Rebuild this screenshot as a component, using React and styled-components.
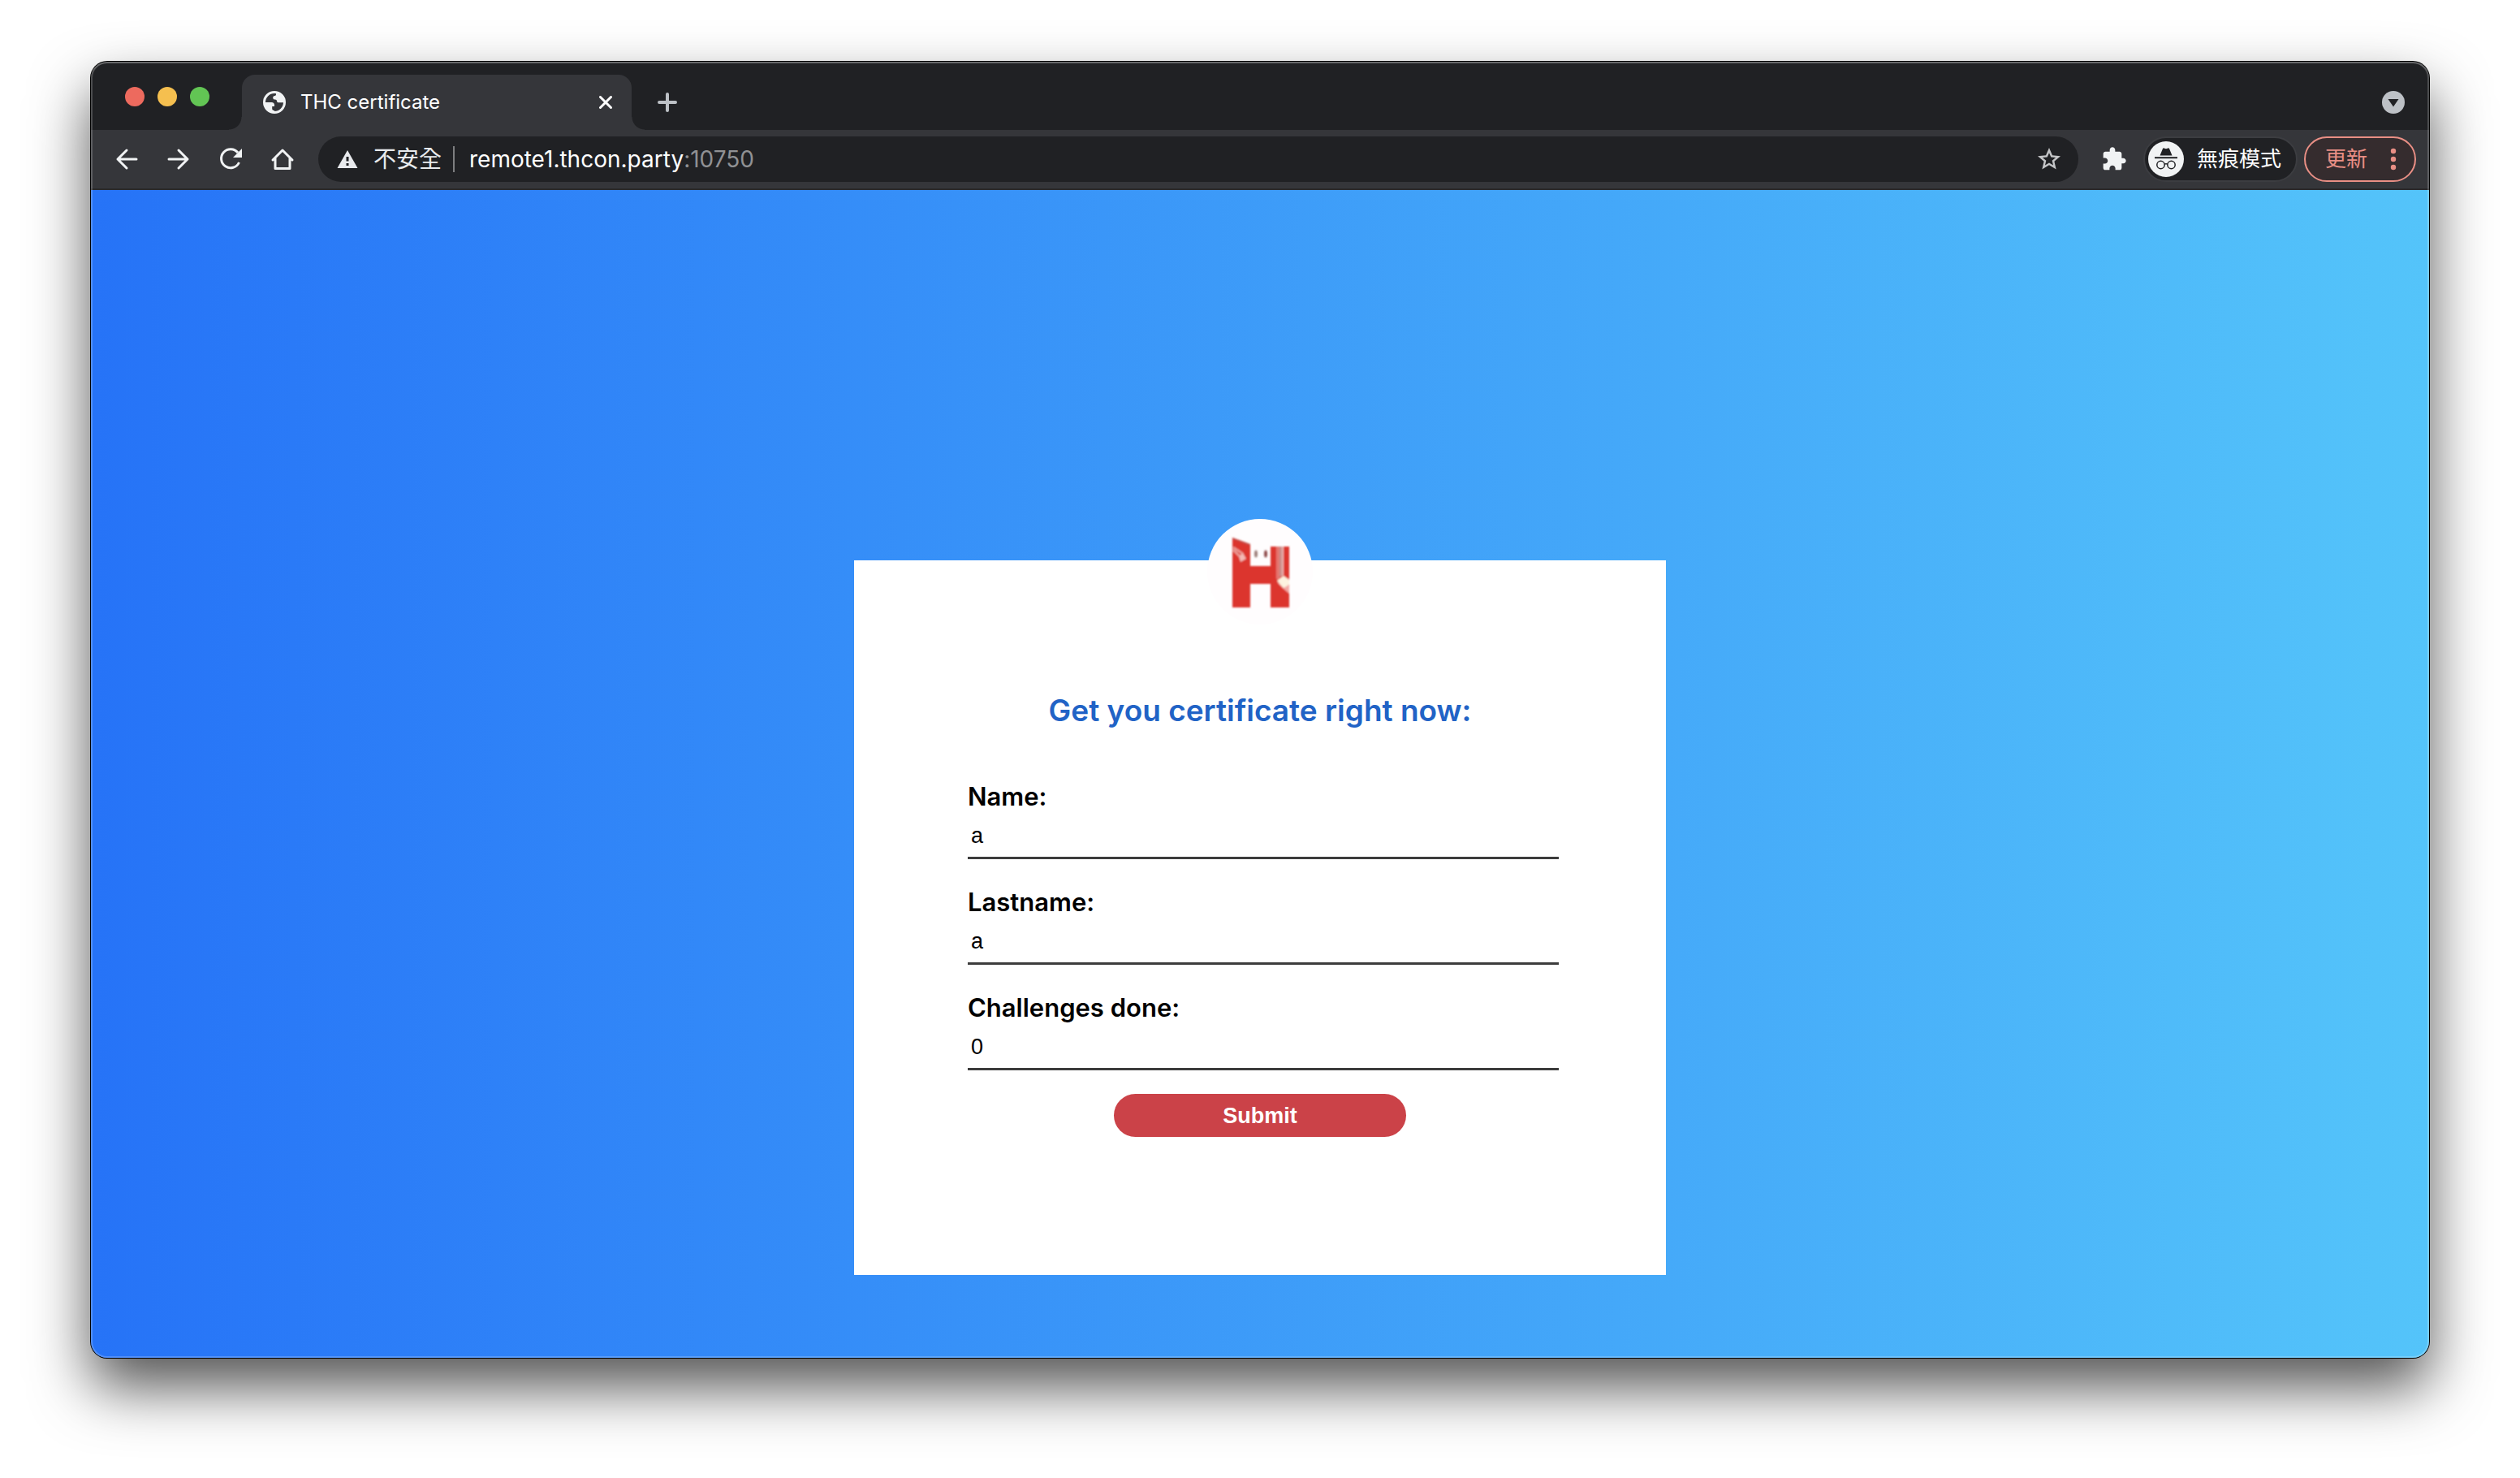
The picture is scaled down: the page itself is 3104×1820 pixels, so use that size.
import React, { useState } from "react";
import styled, { createGlobalStyle } from "styled-components";

const GlobalStyle = createGlobalStyle`
  *, *::before, *::after { box-sizing: border-box; }
  body {
    margin: 0;
    background: #ffffff;
    font-family: Inter, "Noto Sans CJK TC", sans-serif;
  }
  button { font: inherit; cursor: pointer; }
`;

const Desktop = styled.div`
  display: flex;
  min-height: 100vh;
  padding: 76px 112px 148px;
  overflow: hidden;
`;

const BrowserWindow = styled.div`
  position: relative;
  flex: 1;
  min-width: 0;
  display: flex;
  flex-direction: column;
  border-radius: 20px;
  background: #202124;
  box-shadow: 0 0 0 1px #000000, 0 36px 72px rgba(0, 0, 0, 0.68);
  &::after {
    content: "";
    position: absolute;
    inset: 0;
    border-radius: inherit;
    pointer-events: none;
    box-shadow: inset 0 0 0 2px rgba(255, 255, 255, 0.2),
      inset 0 2px 0 rgba(255, 255, 255, 0.16);
  }
`;

const TabStrip = styled.div`
  display: flex;
  align-items: flex-end;
  height: 84px;
  padding: 0 30px 0 42px;
`;

const TrafficLights = styled.div`
  display: flex;
  gap: 16px;
  width: 144px;
  height: 84px;
  padding-top: 2px;
  align-items: center;
`;

const Light = styled.button`
  width: 24px;
  height: 24px;
  padding: 0;
  border: 0;
  border-radius: 50%;
  background: ${(p) => p.$color};
`;

const Tab = styled.div`
  position: relative;
  display: flex;
  align-items: center;
  gap: 18px;
  width: 480px;
  height: 68px;
  padding: 0 24px 0 26px;
  border-radius: 16px 16px 0 0;
  background: #35363a;
  color: #ffffff;
  &::before, &::after {
    content: "";
    position: absolute;
    bottom: 0;
    width: 16px;
    height: 16px;
  }
  &::before {
    right: 100%;
    background: radial-gradient(circle at 0 0, transparent 15px, #35363a 16px);
  }
  &::after {
    left: 100%;
    background: radial-gradient(circle at 100% 0, transparent 15px, #35363a 16px);
  }
`;

const TabTitle = styled.span`
  flex: 1;
  font-size: 24px;
  line-height: 32px;
  white-space: nowrap;
`;

const StripAction = styled.div`
  display: flex;
  align-items: center;
  height: 68px;
  margin-left: ${(p) => (p.$end ? "auto" : "32px")};
`;

const IconButton = styled.button`
  display: flex;
  padding: 0;
  border: 0;
  background: none;
  color: ${(p) => p.$color || "#f1f3f4"};
`;

const Toolbar = styled.div`
  display: flex;
  align-items: center;
  height: 74px;
  padding: 0 16px 0 28px;
  background: #35363a;
  border-bottom: 2px solid #28292c;
`;

const NavButtons = styled.div`
  display: flex;
  gap: 32px;
  padding-right: 28px;
`;

const AddressBar = styled.div`
  flex: 1;
  min-width: 0;
  display: flex;
  align-items: center;
  height: 56px;
  padding: 0 20px 0 22px;
  border-radius: 28px;
  background: #202124;
  font-size: 28px;
  line-height: 40px;
  white-space: nowrap;
`;

const Security = styled.button`
  display: flex;
  align-items: center;
  gap: 18px;
  padding: 0;
  border: 0;
  background: none;
  color: #e8eaed;
`;

const Divider = styled.span`
  width: 2px;
  height: 32px;
  margin: 0 18px 0 14px;
  background: #7d7e80;
`;

const Url = styled.div`
  flex: 1;
  color: #ffffff;
`;

const Port = styled.span`
  color: #909194;
`;

const Extensions = styled.div`
  display: flex;
  padding: 0 20px 0 28px;
`;

const Chip = styled.button`
  display: flex;
  align-items: center;
  gap: ${(p) => p.$gap};
  height: 56px;
  padding: ${(p) => p.$padding};
  border: 2px solid ${(p) => p.$border};
  border-radius: 28px;
  background: ${(p) => p.$fill};
  color: ${(p) => p.$color};
  && {
    font-size: 26px;
    line-height: 36px;
  }
  white-space: nowrap;
  & + & { margin-left: 8px; }
`;

const Page = styled.main`
  flex: 1;
  display: flex;
  flex-direction: column;
  align-items: center;
  padding: 456px 24px 102px;
  border-radius: 0 0 20px 20px;
  background: linear-gradient(to right, #2673f7, #54c4fa);
`;

const Card = styled.form`
  display: flex;
  flex-direction: column;
  align-items: center;
  width: 100%;
  max-width: 1000px;
  padding-bottom: 170px;
  background: #ffffff;
`;

const Logo = styled.div`
  width: 130px;
  height: 130px;
  margin-top: -51px;
  border-radius: 50%;
  background: #fffdfe;
`;

const Heading = styled.h1`
  margin: 82px 0 62px;
  color: #2163c6;
  font-size: 37px;
  font-weight: 600;
  line-height: 48px;
`;

const Fields = styled.div`
  align-self: stretch;
  display: flex;
  flex-direction: column;
  gap: 33px;
  padding: 0 132px 0 140px;
`;

const Field = styled.div`
  display: flex;
  flex-direction: column;
`;

const Label = styled.label`
  color: #000000;
  font-size: 31px;
  font-weight: 600;
  line-height: 40px;
`;

const Input = styled.input`
  width: 100%;
  height: 57px;
  padding: 2px 4px 0;
  border: 0;
  border-bottom: 3px solid #3c3c3c;
  outline: none;
  background: transparent;
  color: #000000;
  font-family: "Liberation Sans", Arial, sans-serif;
  font-size: 27px;
`;

const Submit = styled.button`
  width: 360px;
  height: 53px;
  margin-top: 29px;
  padding: 0;
  border: 0;
  border-radius: 27px;
  background: #cb4248;
  color: #ffffff;
  && {
    font-family: "Liberation Sans", Arial, sans-serif;
    font-size: 27px;
    font-weight: 700;
    line-height: 32px;
  }
`;

const Stroke = ({ size = 32, width = 3, children }) => (
  <svg width={size} height={size} viewBox={`0 0 ${size} ${size}`} fill="none"
    stroke="currentColor" strokeWidth={width} strokeLinecap="round" strokeLinejoin="round" aria-hidden="true">
    {children}
  </svg>
);

const Globe = () => (
  <svg width="28" height="28" viewBox="0 0 28 28" aria-hidden="true">
    <circle cx="14" cy="14" r="12.5" fill="none" stroke="#f1f3f4" strokeWidth="3" />
    <path fill="#f1f3f4" d="M2 14h8.500c2.300.2 3.500 1.400 3.500 3.300v1.700h-2.800v3c.2 1.500 1 2 2.800 2V27C6 26 2 20 2 14z" />
    <path fill="#f1f3f4" d="M16 2.500v2c0 .8-.6 1.300-1.600 1.500-1.500.3-2.200 1-2.200 2.200 0 1.600 1 2.300 2.600 2.400 1.400.1 2 .7 2.200 1.800.2 1.300 1 1.800 2.500 1.800H26.500C26 7 22 3 16 2.500z" />
  </svg>
);

const Warning = () => (
  <svg width="28" height="28" viewBox="0 0 28 28" aria-hidden="true">
    <path fill="#e8eaed" fillRule="evenodd" d="M14 3 26.500 25h-25zM12.500 11v5.500h3V11zm0 8v3h3v-3z" />
  </svg>
);

const Star = () => (
  <svg width="32" height="32" viewBox="0 0 24 24" aria-hidden="true">
    <path fill="currentColor" d="M22.500 9.200l-7.500-.7L12 1.500 9 8.500l-7.500.7 5.700 4.900L5.500 21.400 12 17.500l6.500 3.900-1.700-7.300zM12 15.400l-3.760 2.270 1-4.280-3.320-2.880 4.380-.38L12 6.100l1.710 4.040 4.380.38-3.320 2.880 1 4.280z" />
  </svg>
);

const Puzzle = () => (
  <svg width="32" height="32" viewBox="0 0 24 24" aria-hidden="true">
    <path fill="currentColor" d="M20.500 11H19V7c0-1.100-.9-2-2-2h-4V3.500C13 2.120 11.880 1 10.500 1S8 2.120 8 3.500V5H4c-1.100 0-1.990.9-1.990 2v3.800H3.500c1.490 0 2.700 1.210 2.700 2.700s-1.210 2.700-2.700 2.700H2V20c0 1.100.9 2 2 2h3.800v-1.500c0-1.490 1.210-2.700 2.700-2.700s2.700 1.210 2.700 2.700V22H17c1.100 0 2-.9 2-2v-4h1.500c1.380 0 2.500-1.120 2.500-2.500S21.880 11 20.500 11z" />
  </svg>
);

const Incognito = () => (
  <svg width="44" height="44" viewBox="0 0 44 44" aria-hidden="true">
    <circle cx="22" cy="22" r="22" fill="#f1f3f4" />
    <path fill="#202124" d="M14.500 17.500 18 9c.3-.6.900-.8 1.500-.5l2.500.8 2.500-.8c.6-.3 1.200-.1 1.500.5l3.500 8.500z" />
    <rect x="8" y="19.200" width="28" height="2" fill="#202124" />
    <g fill="none" stroke="#202124" strokeWidth="1.500">
      <circle cx="15.500" cy="29" r="4.700" />
      <circle cx="28.500" cy="29" r="4.700" />
      <path d="M20 28.200q2-1 4 0" />
    </g>
  </svg>
);

const Dots = () => (
  <svg width="8" height="28" viewBox="0 0 8 28" aria-hidden="true" fill="currentColor">
    <circle cx="4" cy="4" r="3.200" />
    <circle cx="4" cy="14" r="3.200" />
    <circle cx="4" cy="24" r="3.200" />
  </svg>
);

const HLogo = () => (
  <svg width="130" height="130" viewBox="0 0 130 130" role="img" aria-label="THC">
    <defs>
      <filter id="soft" x="-10%" y="-10%" width="120%" height="120%">
        <feGaussianBlur stdDeviation="0.8" />
      </filter>
    </defs>
    <g filter="url(#soft)">
      <path fill="#dc352e" d="M31 23l22 8v27h25V34h23v75H78V80H53v29H31z" />
      <path stroke="#c0504c" strokeWidth="1.500" fill="none" d="M31 24l22 8" />
      <path stroke="#ec9f9a" strokeWidth="2.500" fill="none" d="M32 35l12 8M32 38l8 8" />
      <path fill="#f3b9b5" d="M39 46l5-4 4 7-7 4z" />
      <path fill="#e5766f" d="M85 34h4v40h-4z" />
      <path fill="#c98d8a" d="M89 34h3v37h-3z" />
      <path fill="#eeb3af" d="M92 34h2v36h-2z" />
      <path fill="#f3a9a4" d="M86 78l15 4v10l-7-6z" />
      <path fill="#fdf3e0" d="M86 76l8-6 7 5v6l-7 4z" />
      <ellipse cx="60" cy="43" rx="2" ry="4.500" fill="#9c7f7b" />
      <ellipse cx="72" cy="43" rx="2" ry="4.500" fill="#8f4b4b" />
    </g>
  </svg>
);

const FIELDS = [
  { id: "name", label: "Name:", value: "a" },
  { id: "lastname", label: "Lastname:", value: "a" },
  { id: "challenges", label: "Challenges done:", value: "0" },
];

export default function App() {
  const [values, setValues] = useState(() => Object.fromEntries(FIELDS.map((f) => [f.id, f.value])));

  return (
    <>
      <GlobalStyle />
      <Desktop>
        <BrowserWindow>
          <TabStrip>
            <TrafficLights>
              <Light $color="#ed6a5e" aria-label="Close window" />
              <Light $color="#f5bf4f" aria-label="Minimize window" />
              <Light $color="#62c554" aria-label="Zoom window" />
            </TrafficLights>
            <Tab>
              <Globe />
              <TabTitle>THC certificate</TabTitle>
              <IconButton $color="#ffffff" aria-label="Close tab">
                <Stroke size={16} width={3}><path d="M1.500 1.500l13 13M14.500 1.500l-13 13" /></Stroke>
              </IconButton>
            </Tab>
            <StripAction>
              <IconButton $color="#bdc1c6" aria-label="New tab">
                <Stroke size={24} width={4}><path d="M12 2v20M2 12h20" /></Stroke>
              </IconButton>
            </StripAction>
            <StripAction $end>
              <IconButton $color="#bdc1c6" aria-label="Search tabs">
                <svg width="28" height="28" viewBox="0 0 28 28" aria-hidden="true">
                  <circle cx="14" cy="14" r="14" fill="currentColor" />
                  <path d="M7.500 10h13L14 19.500z" fill="#202124" />
                </svg>
              </IconButton>
            </StripAction>
          </TabStrip>

          <Toolbar>
            <NavButtons>
              <IconButton aria-label="Back">
                <Stroke><path d="M28 16H5M16 5 5 16l11 11" /></Stroke>
              </IconButton>
              <IconButton aria-label="Forward">
                <Stroke><path d="M4 16h23M16 5l11 11-11 11" /></Stroke>
              </IconButton>
              <IconButton aria-label="Reload">
                <svg width="32" height="32" viewBox="0 0 32 32" aria-hidden="true">
                  <path d="M26.500 20A11.500 11.500 0 1 1 25 8" fill="none" stroke="currentColor" strokeWidth="3" />
                  <path d="M30 3v11H19z" fill="currentColor" />
                </svg>
              </IconButton>
              <IconButton aria-label="Home">
                <Stroke><path d="M4 17 16 5l12 12M7 15v12.500h18V15" /></Stroke>
              </IconButton>
            </NavButtons>
            <AddressBar>
              <Security type="button"><Warning />不安全</Security>
              <Divider />
              <Url>remote1.thcon.party<Port>:10750</Port></Url>
              <IconButton $color="#c4c5c7" aria-label="Bookmark this page"><Star /></IconButton>
            </AddressBar>
            <Extensions>
              <IconButton aria-label="Extensions"><Puzzle /></IconButton>
            </Extensions>
            <Chip $gap="16px" $padding="0 18px 0 4px" $border="#3c3d41" $fill="#202124" $color="#ffffff">
              <Incognito />無痕模式
            </Chip>
            <Chip $gap="28px" $padding="0 22px 0 24px" $border="#e98f85" $fill="#352c2e" $color="#e98f85">
              更新<Dots />
            </Chip>
          </Toolbar>

          <Page>
            <Card onSubmit={(e) => e.preventDefault()}>
              <Logo><HLogo /></Logo>
              <Heading>Get you certificate right now:</Heading>
              <Fields>
                {FIELDS.map((f) => (
                  <Field key={f.id}>
                    <Label htmlFor={f.id}>{f.label}</Label>
                    <Input
                      id={f.id}
                      value={values[f.id]}
                      onChange={(e) => setValues({ ...values, [f.id]: e.target.value })}
                    />
                  </Field>
                ))}
              </Fields>
              <Submit type="submit">Submit</Submit>
            </Card>
          </Page>
        </BrowserWindow>
      </Desktop>
    </>
  );
}
